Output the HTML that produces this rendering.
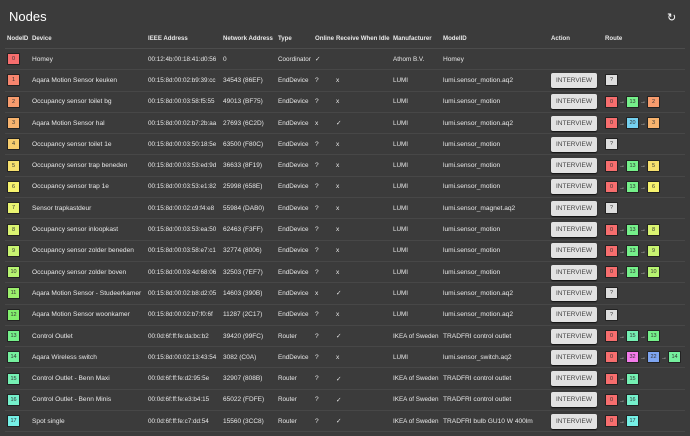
<!DOCTYPE html><html><head><meta charset="utf-8"><style>
body{margin:0;width:690px;height:436px;background:#3b3b3b;font-family:"Liberation Sans",sans-serif;color:#e8e8e8;overflow:hidden;position:relative}
h1{position:absolute;left:9px;top:9px;margin:0;font-size:13px;font-weight:normal;color:#fff}
.rf{position:absolute;left:667px;top:11px;font-size:11px;color:#fff}
table{position:absolute;left:5px;top:28px;border-collapse:collapse;table-layout:fixed;width:680px;font-size:6.6px}
td,th{padding:0 0 0 2px;white-space:nowrap;overflow:hidden;text-align:left}
th{height:20px;font-weight:bold;border-bottom:1px solid #4c4c4c;font-size:6.1px}
td{height:20.3px;border-bottom:1px solid #474747}
td:nth-child(3){font-size:6.3px}
td:nth-child(4){font-size:6.5px}
td:nth-child(5){font-size:6.3px}
td:nth-child(8){font-size:6.3px}
.b{display:inline-block;min-width:9px;height:10px;line-height:10px;padding:0 1px;text-align:center;font-size:5.5px;color:#333;border:1px solid #222;border-radius:1px;vertical-align:middle}
.btn{display:inline-block;width:46px;height:15px;line-height:15px;background:#e2e2e2;color:#444;text-align:center;font-size:6.5px;border-radius:2px;box-shadow:0 1px 1px #111}
.a{color:#ddd;font-size:6px;margin:0 1px}
</style></head><body>
<h1>Nodes</h1><div class="rf">↻</div>
<table>
<colgroup><col style="width:25px"><col style="width:116px"><col style="width:75px"><col style="width:55px"><col style="width:37px"><col style="width:21px"><col style="width:57px"><col style="width:50px"><col style="width:108px"><col style="width:54px"><col style="width:82px"></colgroup>
<tr><th>NodeID</th><th>Device</th><th>IEEE Address</th><th>Network Address</th><th>Type</th><th>Online</th><th>Receive When Idle</th><th>Manufacturer</th><th>ModelID</th><th>Action</th><th>Route</th></tr>
<tr><td><span class="b" style="background:hsl(0,90%,70%)">0</span></td><td>Homey</td><td>00:12:4b:00:18:41:d0:56</td><td>0</td><td>Coordinator</td><td>✓</td><td></td><td>Athom B.V.</td><td>Homey</td><td></td><td></td></tr>
<tr><td><span class="b" style="background:hsl(10,90%,70%)">1</span></td><td>Aqara Motion Sensor keuken</td><td>00:15:8d:00:02:b9:39:cc</td><td>34543 (86EF)</td><td>EndDevice</td><td>?</td><td>x</td><td>LUMI</td><td>lumi.sensor_motion.aq2</td><td><span class="btn">INTERVIEW</span></td><td><span class="b" style="background:#ddd">?</span></td></tr>
<tr><td><span class="b" style="background:hsl(20,90%,70%)">2</span></td><td>Occupancy sensor toilet bg</td><td>00:15:8d:00:03:58:f5:55</td><td>49013 (BF75)</td><td>EndDevice</td><td>?</td><td>x</td><td>LUMI</td><td>lumi.sensor_motion</td><td><span class="btn">INTERVIEW</span></td><td><span class="b" style="background:hsl(0,90%,70%)">0</span><span class="a">→</span><span class="b" style="background:hsl(130,80%,70%)">13</span><span class="a">→</span><span class="b" style="background:hsl(20,90%,70%)">2</span></td></tr>
<tr><td><span class="b" style="background:hsl(30,90%,70%)">3</span></td><td>Aqara Motion Sensor hal</td><td>00:15:8d:00:02:b7:2b:aa</td><td>27693 (6C2D)</td><td>EndDevice</td><td>x</td><td>✓</td><td>LUMI</td><td>lumi.sensor_motion.aq2</td><td><span class="btn">INTERVIEW</span></td><td><span class="b" style="background:hsl(0,90%,70%)">0</span><span class="a">→</span><span class="b" style="background:hsl(195,80%,70%)">20</span><span class="a">→</span><span class="b" style="background:hsl(30,90%,70%)">3</span></td></tr>
<tr><td><span class="b" style="background:hsl(42,90%,70%)">4</span></td><td>Occupancy sensor toilet 1e</td><td>00:15:8d:00:03:50:18:5e</td><td>63500 (F80C)</td><td>EndDevice</td><td>?</td><td>x</td><td>LUMI</td><td>lumi.sensor_motion</td><td><span class="btn">INTERVIEW</span></td><td><span class="b" style="background:#ddd">?</span></td></tr>
<tr><td><span class="b" style="background:hsl(50,90%,70%)">5</span></td><td>Occupancy sensor trap beneden</td><td>00:15:8d:00:03:53:ed:9d</td><td>36633 (8F19)</td><td>EndDevice</td><td>?</td><td>x</td><td>LUMI</td><td>lumi.sensor_motion</td><td><span class="btn">INTERVIEW</span></td><td><span class="b" style="background:hsl(0,90%,70%)">0</span><span class="a">→</span><span class="b" style="background:hsl(130,80%,70%)">13</span><span class="a">→</span><span class="b" style="background:hsl(50,90%,70%)">5</span></td></tr>
<tr><td><span class="b" style="background:hsl(58,90%,70%)">6</span></td><td>Occupancy sensor trap 1e</td><td>00:15:8d:00:03:53:e1:82</td><td>25998 (658E)</td><td>EndDevice</td><td>?</td><td>x</td><td>LUMI</td><td>lumi.sensor_motion</td><td><span class="btn">INTERVIEW</span></td><td><span class="b" style="background:hsl(0,90%,70%)">0</span><span class="a">→</span><span class="b" style="background:hsl(130,80%,70%)">13</span><span class="a">→</span><span class="b" style="background:hsl(58,90%,70%)">6</span></td></tr>
<tr><td><span class="b" style="background:hsl(65,85%,70%)">7</span></td><td>Sensor trapkastdeur</td><td>00:15:8d:00:02:c9:f4:e8</td><td>55984 (DAB0)</td><td>EndDevice</td><td>?</td><td>x</td><td>LUMI</td><td>lumi.sensor_magnet.aq2</td><td><span class="btn">INTERVIEW</span></td><td><span class="b" style="background:#ddd">?</span></td></tr>
<tr><td><span class="b" style="background:hsl(72,85%,70%)">8</span></td><td>Occupancy sensor inloopkast</td><td>00:15:8d:00:03:53:ea:50</td><td>62463 (F3FF)</td><td>EndDevice</td><td>?</td><td>x</td><td>LUMI</td><td>lumi.sensor_motion</td><td><span class="btn">INTERVIEW</span></td><td><span class="b" style="background:hsl(0,90%,70%)">0</span><span class="a">→</span><span class="b" style="background:hsl(130,80%,70%)">13</span><span class="a">→</span><span class="b" style="background:hsl(72,85%,70%)">8</span></td></tr>
<tr><td><span class="b" style="background:hsl(80,85%,70%)">9</span></td><td>Occupancy sensor zolder beneden</td><td>00:15:8d:00:03:58:e7:c1</td><td>32774 (8006)</td><td>EndDevice</td><td>?</td><td>x</td><td>LUMI</td><td>lumi.sensor_motion</td><td><span class="btn">INTERVIEW</span></td><td><span class="b" style="background:hsl(0,90%,70%)">0</span><span class="a">→</span><span class="b" style="background:hsl(130,80%,70%)">13</span><span class="a">→</span><span class="b" style="background:hsl(80,85%,70%)">9</span></td></tr>
<tr><td><span class="b" style="background:hsl(88,85%,70%)">10</span></td><td>Occupancy sensor zolder boven</td><td>00:15:8d:00:03:4d:68:06</td><td>32503 (7EF7)</td><td>EndDevice</td><td>?</td><td>x</td><td>LUMI</td><td>lumi.sensor_motion</td><td><span class="btn">INTERVIEW</span></td><td><span class="b" style="background:hsl(0,90%,70%)">0</span><span class="a">→</span><span class="b" style="background:hsl(130,80%,70%)">13</span><span class="a">→</span><span class="b" style="background:hsl(88,85%,70%)">10</span></td></tr>
<tr><td><span class="b" style="background:hsl(98,80%,68%)">11</span></td><td>Aqara Motion Sensor - Studeerkamer</td><td>00:15:8d:00:02:b8:d2:05</td><td>14603 (390B)</td><td>EndDevice</td><td>x</td><td>✓</td><td>LUMI</td><td>lumi.sensor_motion.aq2</td><td><span class="btn">INTERVIEW</span></td><td><span class="b" style="background:#ddd">?</span></td></tr>
<tr><td><span class="b" style="background:hsl(110,80%,68%)">12</span></td><td>Aqara Motion Sensor woonkamer</td><td>00:15:8d:00:02:b7:f0:6f</td><td>11287 (2C17)</td><td>EndDevice</td><td>?</td><td>x</td><td>LUMI</td><td>lumi.sensor_motion.aq2</td><td><span class="btn">INTERVIEW</span></td><td><span class="b" style="background:#ddd">?</span></td></tr>
<tr><td><span class="b" style="background:hsl(130,80%,70%)">13</span></td><td>Control Outlet</td><td>00:0d:6f:ff:fe:da:bc:b2</td><td>39420 (99FC)</td><td>Router</td><td>?</td><td>✓</td><td>IKEA of Sweden</td><td>TRADFRI control outlet</td><td><span class="btn">INTERVIEW</span></td><td><span class="b" style="background:hsl(0,90%,70%)">0</span><span class="a">→</span><span class="b" style="background:hsl(150,80%,70%)">15</span><span class="a">→</span><span class="b" style="background:hsl(130,80%,70%)">13</span></td></tr>
<tr><td><span class="b" style="background:hsl(140,80%,70%)">14</span></td><td>Aqara Wireless switch</td><td>00:15:8d:00:02:13:43:54</td><td>3082 (C0A)</td><td>EndDevice</td><td>?</td><td>x</td><td>LUMI</td><td>lumi.sensor_switch.aq2</td><td><span class="btn">INTERVIEW</span></td><td><span class="b" style="background:hsl(0,90%,70%)">0</span><span class="a">→</span><span class="b" style="background:hsl(305,85%,72%)">32</span><span class="a">→</span><span class="b" style="background:hsl(220,80%,72%)">22</span><span class="a">→</span><span class="b" style="background:hsl(140,80%,70%)">14</span></td></tr>
<tr><td><span class="b" style="background:hsl(150,80%,70%)">15</span></td><td>Control Outlet - Benn Maxi</td><td>00:0d:6f:ff:fe:d2:95:5e</td><td>32907 (808B)</td><td>Router</td><td>?</td><td>✓</td><td>IKEA of Sweden</td><td>TRADFRI control outlet</td><td><span class="btn">INTERVIEW</span></td><td><span class="b" style="background:hsl(0,90%,70%)">0</span><span class="a">→</span><span class="b" style="background:hsl(150,80%,70%)">15</span></td></tr>
<tr><td><span class="b" style="background:hsl(162,80%,70%)">16</span></td><td>Control Outlet - Benn Minis</td><td>00:0d:6f:ff:fe:e3:b4:15</td><td>65022 (FDFE)</td><td>Router</td><td>?</td><td>✓</td><td>IKEA of Sweden</td><td>TRADFRI control outlet</td><td><span class="btn">INTERVIEW</span></td><td><span class="b" style="background:hsl(0,90%,70%)">0</span><span class="a">→</span><span class="b" style="background:hsl(162,80%,70%)">16</span></td></tr>
<tr><td><span class="b" style="background:hsl(175,80%,70%)">17</span></td><td>Spot single</td><td>00:0d:6f:ff:fe:c7:dd:54</td><td>15560 (3CC8)</td><td>Router</td><td>?</td><td>✓</td><td>IKEA of Sweden</td><td>TRADFRI bulb GU10 W 400lm</td><td><span class="btn">INTERVIEW</span></td><td><span class="b" style="background:hsl(0,90%,70%)">0</span><span class="a">→</span><span class="b" style="background:hsl(175,80%,70%)">17</span></td></tr>
</table>
</body></html>
